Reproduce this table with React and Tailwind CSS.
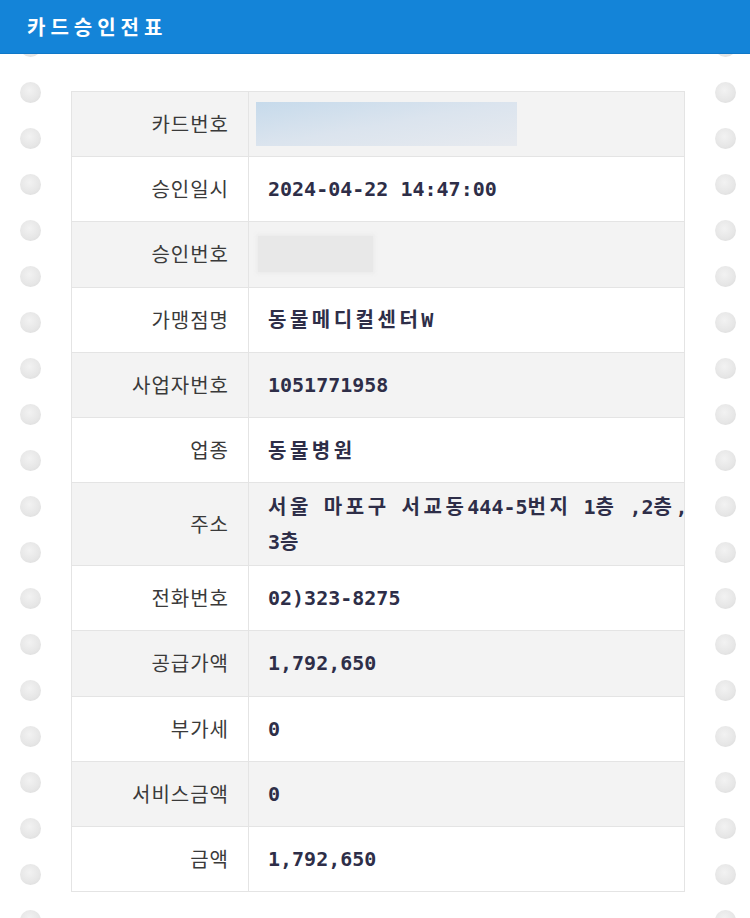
import React from "react";

const rows = [
  { label: "카드번호", type: "card", bg: "bg-[#f3f3f3]" },
  { label: "승인일시", value: "2024-04-22 14:47:00", bg: "bg-white" },
  { label: "승인번호", type: "appr", bg: "bg-[#f3f3f3]" },
  { label: "가맹점명", value: "동물메디컬센터W", bg: "bg-white" },
  { label: "사업자번호", value: "1051771958", bg: "bg-[#f3f3f3]" },
  { label: "업종", value: "동물병원", bg: "bg-white" },
  { label: "주소", type: "addr", bg: "bg-[#f3f3f3]" },
  { label: "전화번호", value: "02)323-8275", bg: "bg-white" },
  { label: "공급가액", value: "1,792,650", bg: "bg-[#f3f3f3]" },
  { label: "부가세", value: "0", bg: "bg-white" },
  { label: "서비스금액", value: "0", bg: "bg-[#f3f3f3]" },
  { label: "금액", value: "1,792,650", bg: "bg-white" },
];

const monoStack = {
  fontFamily: '"DejaVu Sans Mono", "Noto Sans CJK KR", monospace',
};

function Val({ text }) {
  const parts = text.split(/([가-힣]+)/);
  return (
    <>
      {parts.map((p, i) =>
        /[가-힣]/.test(p) ? (
          <span
            key={i}
            className="tracking-[3.5px]"
            style={{ fontFamily: '"Noto Sans CJK KR", sans-serif' }}
          >
            {p}
          </span>
        ) : (
          <span key={i}>{p}</span>
        )
      )}
    </>
  );
}

function Holes() {
  const holes = Array.from({ length: 20 });
  return (
    <div className="flex flex-col gap-[25px] -mt-[18.5px]">
      {holes.map((_, i) => (
        <div
          key={i}
          className="w-[21px] h-[21px] rounded-full bg-[radial-gradient(circle_at_45%_40%,#f2f2f2_0%,#e6e6e6_60%,#d8d8d8_100%)]"
        />
      ))}
    </div>
  );
}

export default function App() {
  return (
    <div
      className="w-[750px] h-[918px] overflow-hidden bg-white"
      style={{ fontFamily: '"Noto Sans CJK KR", "Noto Sans", sans-serif' }}
    >
      <header className="relative z-10 h-[54px] bg-[#1484d8] border-b border-[#0f78c8] flex items-center pl-[27px]">
        <span className="text-white font-bold text-[20px] tracking-[5px]">카드승인전표</span>
      </header>
      <div className="flex">
        <div className="w-[71px] shrink-0 pl-[20px]">
          <Holes />
        </div>
        <div className="w-[614px] shrink-0 mt-[37px] border-t border-x border-[#e4e4e4] self-start">
          {rows.map((r, i) => (
            <div
              key={i}
              className={
                "flex border-b border-[#e4e4e4] " +
                r.bg +
                (r.type === "addr" ? " h-[83px]" : " h-[65.2px]")
              }
            >
              <div className="w-[177px] shrink-0 border-r border-[#e4e4e4] flex items-center justify-end pr-[19px] text-[20px] text-[#3a3a3a] tracking-[1px]">
                {r.label}
              </div>
              <div className="flex-1 flex items-center min-w-0">
                {r.type === "card" ? (
                  <div className="ml-[7px] w-[261px] h-[44px] bg-[linear-gradient(170deg,#c6daeb_0%,#dbe4ee_50%,#e7eaef_100%)]" />
                ) : r.type === "appr" ? (
                  <div className="ml-[9px] w-[115px] h-[36px] bg-[#e8e8e8] shadow-[0_0_4px_2px_#ececec]" />
                ) : r.type === "addr" ? (
                  <div
                    className="pl-[19px] text-[20px] font-bold text-[#2e2e48] leading-[33px]"
                    style={monoStack}
                  >
                    <span className="whitespace-nowrap">
                      <Val text="서울 마포구 서교동444-5번지 1층 ,2층," />
                    </span>
                    <br />
                    <Val text="3층" />
                  </div>
                ) : (
                  <div
                    className="pl-[19px] text-[20px] font-bold text-[#2e2e48] whitespace-nowrap"
                    style={monoStack}
                  >
                    <Val text={r.value} />
                  </div>
                )}
              </div>
            </div>
          ))}
        </div>
        <div className="shrink-0 pl-[30px]">
          <Holes />
        </div>
      </div>
    </div>
  );
}
